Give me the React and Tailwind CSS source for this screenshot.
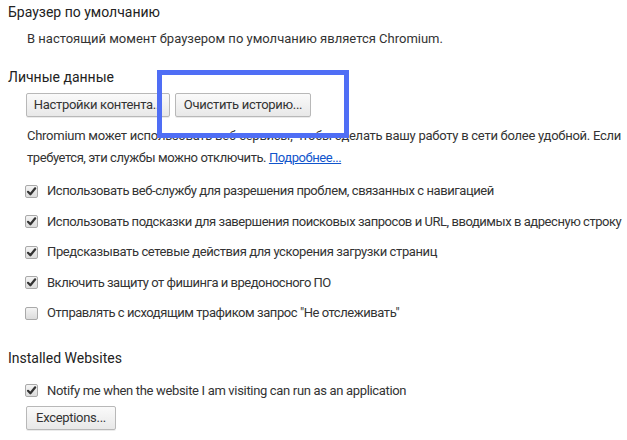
import React from "react";

const font = { fontFamily: 'Roboto, "Open Sans", sans-serif' };

function Btn({ children, w }) {
  return (
    <button
      className={`h-[24px] ${w} rounded-[2px] border border-[#b8b8b8] bg-gradient-to-b from-[#fafafa] to-[#e8e8e8] text-[13px] tracking-[-0.3px] text-[#333] shadow-[0_1px_0_rgba(0,0,0,0.08)] flex items-center justify-center whitespace-nowrap`}
    >
      {children}
    </button>
  );
}

function Check({ checked, children, t = "tracking-[-0.43px]" }) {
  return (
    <div className="h-[30.5px] flex items-center gap-[9px] pl-[17px]">
      <span className="shrink-0 w-[13px] h-[13px] rounded-[2px] border border-[#a9a9a9] bg-gradient-to-b from-[#f4f4f4] to-[#dcdcdc] flex items-center justify-center">
        {checked && (
          <svg width="11" height="11" viewBox="0 0 11 11">
            <path d="M2 5.8 L4.4 8.3 L9.2 2.3" fill="none" stroke="#333" strokeWidth="2.2" strokeLinecap="round" strokeLinejoin="round" />
          </svg>
        )}
      </span>
      <span className={`text-[13px] text-[#333] leading-[20px] whitespace-nowrap ${t}`}>{children}</span>
    </div>
  );
}

export default function App() {
  return (
    <div className="relative w-[627px] h-[440px] bg-white overflow-hidden text-[#333]" style={font}>
      <div className="pt-[2px] pl-[8px]">
        <h3 className="text-[14px] leading-[20px] text-[#222]">Браузер по умолчанию</h3>
        <div className="mt-[7px] pl-[19px] text-[13px] leading-[20px]">
          В настоящий момент браузером по умолчанию является Chromium.
        </div>

        <h3 className="mt-[18px] text-[14px] leading-[20px] text-[#222]">Личные данные</h3>
        <div className="mt-[6px] pl-[18px] flex gap-[5px]">
          <Btn w="w-[144px]">Настройки контента...</Btn>
          <Btn w="w-[136px]">Очистить историю...</Btn>
        </div>
        <div className="mt-[8px] pl-[19px] text-[13px] leading-[22px] whitespace-nowrap">
          <div className="tracking-[-0.26px]">
            Chromium может использовать веб-сервисы, чтобы сделать вашу работу в сети более удобной. Если
          </div>
          <div className="tracking-[-0.43px]">
            требуется, эти службы можно отключить.{" "}
            <a className="text-[#1155cc] underline">Подробнее...</a>
          </div>
        </div>
        <div className="mt-[7px]">
          <Check checked>Использовать веб-службу для разрешения проблем, связанных с навигацией</Check>
          <Check checked t="tracking-[-0.45px]">Использовать подсказки для завершения поисковых запросов и URL, вводимых в адресную строку</Check>
          <Check checked t="tracking-[-0.39px]">Предсказывать сетевые действия для ускорения загрузки страниц</Check>
          <Check checked t="tracking-[-0.49px]">Включить защиту от фишинга и вредоносного ПО</Check>
          <Check t="tracking-[-0.44px]">Отправлять с исходящим трафиком запрос "Не отслеживать"</Check>
        </div>

        <h3 className="mt-[19px] text-[14px] leading-[20px] text-[#222]">Installed Websites</h3>
        <div className="mt-[8px]">
          <Check checked t="tracking-[-0.33px]">Notify me when the website I am visiting can run as an application</Check>
        </div>
        <div className="pl-[18px]">
          <Btn w="w-[90px]">Exceptions...</Btn>
        </div>
      </div>

      <div className="absolute left-[157px] top-[70px] w-[192px] h-[68px] border-[5px] border-[#4f6ef5] pointer-events-none" />
    </div>
  );
}
